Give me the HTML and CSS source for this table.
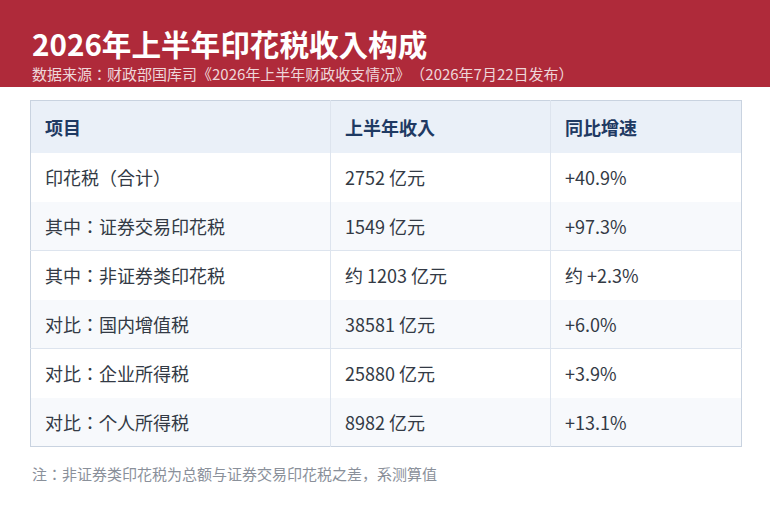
FILE: index.html
```html
<!DOCTYPE html>
<html lang="zh-CN">
<head>
<meta charset="utf-8">
<title>2026年上半年印花税收入构成</title>
<link rel="stylesheet" href="styles.css">
</head>
<body>
<header class="banner">
  <h1 class="title">2026年上半年印花税收入构成</h1>
  <p class="source">数据来源：财政部国库司《2026年上半年财政收支情况》（2026年7月22日发布）</p>
</header>
<main class="content">
  <table class="data">
    <colgroup>
      <col class="c1"><col class="c2"><col class="c3">
    </colgroup>
    <thead>
      <tr><th>项目</th><th>上半年收入</th><th>同比增速</th></tr>
    </thead>
    <tbody>
      <tr><td>印花税（合计）</td><td>2752 亿元</td><td>+40.9%</td></tr>
      <tr class="alt sep"><td>其中：证券交易印花税</td><td>1549 亿元</td><td>+97.3%</td></tr>
      <tr><td>其中：非证券类印花税</td><td>约 1203 亿元</td><td>约 +2.3%</td></tr>
      <tr class="alt sep"><td>对比：国内增值税</td><td>38581 亿元</td><td>+6.0%</td></tr>
      <tr><td>对比：企业所得税</td><td>25880 亿元</td><td>+3.9%</td></tr>
      <tr class="alt"><td>对比：个人所得税</td><td>8982 亿元</td><td>+13.1%</td></tr>
    </tbody>
  </table>
  <p class="note">注：非证券类印花税为总额与证券交易印花税之差，系测算值</p>
</main>
</body>
</html>
```

FILE: styles.css
```css
* { box-sizing: border-box; }
html, body { margin: 0; padding: 0; background: #ffffff; }
body {
  font-family: "Noto Sans CJK JP", "Noto Sans CJK SC", "Noto Sans", sans-serif;
  font-feature-settings: "locl" 0;
  text-spacing-trim: space-all;
  color: #333a45;
  width: 770px;
  height: 522px;
  overflow: hidden;
}
.banner {
  background: #af2a3a;
  height: 87px;
  padding: 25px 32px 0;
}
.title {
  margin: 0;
  font-size: 29.6px;
  line-height: 38px;
  font-weight: 700;
  color: #ffffff;
}
.source {
  margin: 1px 0 0;
  font-size: 15px;
  line-height: 20px;
  color: #eed6d9;
}
.content {
  padding: 13px 30px 0;
}
.data {
  width: 711px;
  border-collapse: collapse;
  border: 1px solid #c9d3e0;
  table-layout: fixed;
}
.c1 { width: 300px; }
.c2 { width: 220px; }
.c3 { width: 191px; }
.data th, .data td {
  text-align: left;
  padding: 0 0 0 14px;
  font-size: 18px;
  border-left: 1px solid #dde4ee;
}
.data th:first-child, .data td:first-child { border-left: none; }
.data th {
  background: #eaf0f8;
  color: #1f3a63;
  font-weight: 700;
  height: 52px;
}
.data td {
  height: 49px;
  color: #333a45;
  font-weight: 400;
}
.data tr.alt td { background: #f7f9fc; }
.data tr.sep td { border-bottom: 1px solid #dde4ee; }
.note {
  margin: 17px 0 0 2px;
  font-size: 15px;
  line-height: 20px;
  color: #8a909a;
}
```
